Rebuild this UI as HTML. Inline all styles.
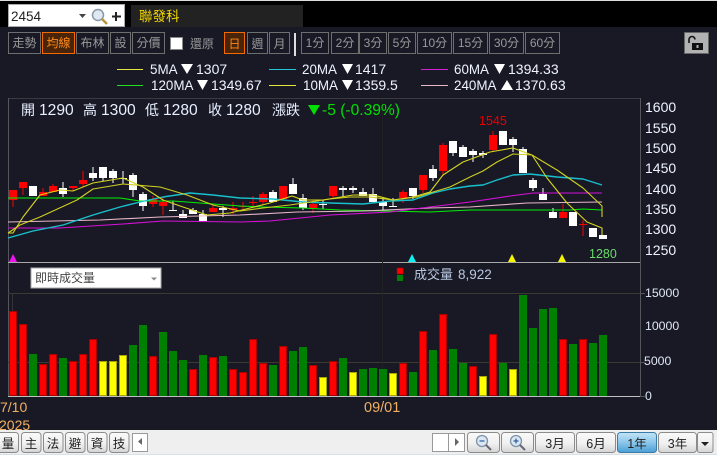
<!DOCTYPE html>
<html><head><meta charset="utf-8"><style>
html,body{margin:0;padding:0;background:#191926;width:717px;height:455px;overflow:hidden}
svg{display:block}
text{font-family:"Liberation Sans","WenQuanYi Zen Hei","Noto Sans CJK TC",sans-serif}
.b{fill:none;stroke:#6e6e6e;stroke-width:1}
.bt{fill:#999;font-size:12px;text-anchor:middle}
.m{fill:#eef4ff;font-size:14px}
.l{fill:#eef4ff;font-size:13.4px}
.r{fill:#eef4ff;font-size:14px}
.v{fill:#dfe8f5;font-size:12.3px}
.h{fill:#e8f0ff;font-size:15.6px}
.c{fill:#e8f0ff;font-size:14px}
.tb{fill:url(#g);stroke:#8c8c8c}
.tt{fill:#222;font-size:12.5px;text-anchor:middle}
</style></head><body>
<svg width="717" height="455" viewBox="0 0 717 455" xmlns="http://www.w3.org/2000/svg">
<defs>
<linearGradient id="g" x1="0" y1="0" x2="0" y2="1"><stop offset="0" stop-color="#fafafa"/><stop offset=".55" stop-color="#f0f0f0"/><stop offset="1" stop-color="#d4d4d4"/></linearGradient>
<linearGradient id="a" x1="0" y1="0" x2="0" y2="1"><stop offset="0" stop-color="#c4e4f6"/><stop offset=".5" stop-color="#8cc6ea"/><stop offset="1" stop-color="#4a9ed4"/></linearGradient>
</defs>
<rect width="717" height="455" fill="#191926"/>
<!-- top -->
<rect width="717" height="27" fill="#000"/>
<rect width="717" height="1" fill="#ddd"/>
<rect x="8.500" y="4.500" width="116" height="22" fill="#fff" stroke="#aaa"/>
<text x="11" y="21" font-size="13.500" fill="#222">2454</text>
<path d="M79 14h7l-3.500 4z" fill="#444"/>
<circle cx="98" cy="15" r="5.500" fill="#dfe9f2" stroke="#8a98a6" stroke-width="1.500"/>
<path d="M102 19l5 5" stroke="#b8953c" stroke-width="2.500"/>
<path d="M116 12v9M112 16.500h9" stroke="#222" stroke-width="2"/>
<rect x="131" y="5" width="172" height="22" fill="#222"/>
<text x="139" y="21" font-size="13.500" fill="#f5d800">聯發科</text>
<!-- buttons -->
<g shape-rendering="crispEdges">
<rect class="b" x="8.500" y="32.500" width="32" height="21"/>
<rect x="42.500" y="32.500" width="32" height="21" fill="#4a2408" stroke="#f26a00"/>
<rect class="b" x="76.500" y="32.500" width="32" height="21"/>
<rect class="b" x="110.500" y="32.500" width="20" height="21"/>
<rect class="b" x="132.500" y="32.500" width="32" height="21"/>
<rect x="170.500" y="37.500" width="12" height="12" fill="#fff" stroke="#888"/>
<rect x="224.500" y="32.500" width="20" height="21" fill="#4a2408" stroke="#f26a00"/>
<rect class="b" x="247.500" y="32.500" width="20" height="21"/>
<rect class="b" x="269.500" y="32.500" width="20" height="21"/>
<rect x="294" y="33" width="2" height="23" fill="#ddd"/>
<rect class="b" x="301.500" y="32.500" width="27" height="21"/>
<rect class="b" x="331.500" y="32.500" width="27" height="21"/>
<rect class="b" x="359.500" y="32.500" width="27" height="21"/>
<rect class="b" x="388.500" y="32.500" width="27" height="21"/>
<rect class="b" x="417.500" y="32.500" width="34" height="21"/>
<rect class="b" x="453.500" y="32.500" width="34" height="21"/>
<rect class="b" x="489.500" y="32.500" width="34" height="21"/>
<rect class="b" x="525.500" y="32.500" width="34" height="21"/>
<rect x="684.500" y="32.500" width="24" height="21" fill="#b2b2b2" stroke="#666"/>
</g>
<text class="bt" x="24.500" y="47">走勢</text>
<text class="bt" x="58.500" y="47" style="fill:#ff8a1a">均線</text>
<text class="bt" x="92.500" y="47">布林</text>
<text class="bt" x="120.500" y="47">設</text>
<text class="bt" x="148.500" y="47">分價</text>
<text class="bt" x="202" y="48">還原</text>
<text class="bt" x="234.500" y="48" style="fill:#ff8a1a">日</text>
<text class="bt" x="257.500" y="48">週</text>
<text class="bt" x="279.500" y="48">月</text>
<text class="bt" x="315" y="47">1分</text>
<text class="bt" x="345" y="47">2分</text>
<text class="bt" x="373" y="47">3分</text>
<text class="bt" x="402" y="47">5分</text>
<text class="bt" x="434.500" y="47">10分</text>
<text class="bt" x="470.500" y="47">15分</text>
<text class="bt" x="506.500" y="47">30分</text>
<text class="bt" x="542.500" y="47">60分</text>
<path d="M689 43v-3.500a3 3 0 0 1 6 0" fill="none" stroke="#111" stroke-width="1.600"/>
<rect x="692" y="43" width="11" height="7" fill="#111"/>
<rect x="696.500" y="45" width="2" height="3" fill="#b2b2b2"/>
<!-- MA legend -->
<g shape-rendering="crispEdges" stroke-width="1">
<path d="M117 69.500h26" stroke="#e6e640"/>
<path d="M117 85.500h26" stroke="#20e020"/>
<path d="M269 69.500h27" stroke="#20c8d8"/>
<path d="M269 85.500h27" stroke="#e6e640"/>
<path d="M421 69.500h27" stroke="#d020d0"/>
<path d="M421 85.500h27" stroke="#e8b8c8"/>
</g>
<text class="l" x="150" y="74">5MA</text>
<path d="M181 64h12l-6 10z" fill="#fff"/>
<text class="m" x="196" y="74">1307</text>
<text class="l" x="151" y="90">120MA</text>
<path d="M197 80h11l-5.500 10z" fill="#fff"/>
<text class="m" x="211" y="90">1349.67</text>
<text class="l" x="302" y="74">20MA</text>
<path d="M342 64h11l-5.500 10z" fill="#fff"/>
<text class="m" x="355" y="74">1417</text>
<text class="l" x="303" y="90">10MA</text>
<path d="M342 80h11l-5.500 10z" fill="#fff"/>
<text class="m" x="355" y="90">1359.5</text>
<text class="l" x="454" y="74">60MA</text>
<path d="M494 64h11l-5.500 10z" fill="#fff"/>
<text class="m" x="508" y="74">1394.33</text>
<text class="l" x="454" y="90">240MA</text>
<path d="M501 90h12l-6-10z" fill="#fff"/>
<text class="m" x="515" y="90">1370.63</text>
<!-- chart frame -->
<g shape-rendering="crispEdges" fill="none">
<path d="M8 98.500H640" stroke="#3a3a42"/>
<path d="M8.500 98V396" stroke="#55555c"/>
<path d="M640.500 98V397" stroke="#55555c"/>
<path d="M8 262.500H640" stroke="#a8a8a8"/>
<path d="M8 293.500H640M8 362.500H640" stroke="#3a3a30"/>
<path d="M382.500 99V396" stroke="#222226"/>
<path d="M12.500 293V311" stroke="#33333a"/>
<path d="M640 293.500h5M640 362.500h5M640 396.500h5" stroke="#55555c"/>
</g>
<!-- header -->
<text class="c" x="21" y="115">開</text><text class="h" x="39" y="115">1290</text>
<text class="c" x="83" y="115">高</text><text class="h" x="101" y="115">1300</text>
<text class="c" x="145" y="115">低</text><text class="h" x="163" y="115">1280</text>
<text class="c" x="208" y="115">收</text><text class="h" x="226" y="115">1280</text>
<text class="c" x="272" y="115">漲跌</text>
<path d="M308 105h12l-6 10z" fill="#00e000"/>
<text x="322" y="115" font-size="15.600" fill="#00e000">-5 (-0.39%)</text>
<!-- candles -->
<g shape-rendering="crispEdges">
<path fill="none" stroke="#f00" d="M13 190V207M23 182V195M43 188V196M53 184V192M73 186V191M83 171V187M153 196V207M163 197V215M213 205V212M233 202V214M243 202V210M253 196V207M263 192V204M313 200V213M333 186V198M403 190V203M423 175V193M443 143V176M493 131V152M563 204V218M583 220V236"/>
<path fill="#f00" d="M9 190h8v10h-8zM19 182h8v6h-8zM39 192h8v4h-8zM49 186h8v6h-8zM69 186h8v2h-8zM79 180h8v4h-8zM149 199h8v5h-8zM159 202h8v4h-8zM209 208h8v4h-8zM229 208h8v2h-8zM239 206h8v1h-8zM249 202h8v1h-8zM259 194h8v8h-8zM279 186h8v13h-8zM309 204h8v4h-8zM329 186h8v10h-8zM399 192h8v6h-8zM419 175h8v15h-8zM439 145h8v26h-8zM489 135h8v15h-8zM559 212h8v6h-8zM579 224h8v1h-8z"/>
<path fill="none" stroke="#fff" d="M63 182V197M93 167V181M103 167V181M113 169V183M123 171V184M133 173V197M143 192V211M173 201V211M183 210V218M193 208V214M203 210V221M223 206V217M273 190V202M293 178V194M303 194V210M323 200V209M343 186V197M353 186V193M363 188V196M373 188V202M383 198V210M393 198V207M413 188V199M433 165V181M453 141V156M463 145V157M473 149V162M483 151V158M513 137V152M523 147V173M533 178V191M543 188V200M553 208V218"/>
<path fill="#fff" d="M29 186h8v10h-8zM59 188h8v6h-8zM89 173h8v5h-8zM99 167h8v11h-8zM109 171h8v7h-8zM119 178h8v1h-8zM129 175h8v15h-8zM139 194h8v12h-8zM169 210h8v1h-8zM179 214h8v4h-8zM189 210h8v4h-8zM199 214h8v7h-8zM219 208h8v2h-8zM269 192h8v10h-8zM289 184h8v10h-8zM299 198h8v10h-8zM319 204h8v1h-8zM339 188h8v2h-8zM349 188h8v2h-8zM359 192h8v4h-8zM369 194h8v8h-8zM379 202h8v4h-8zM389 206h8v1h-8zM409 188h8v8h-8zM429 169h8v9h-8zM449 141h8v12h-8zM459 147h8v10h-8zM469 151h8v4h-8zM479 153h8v2h-8zM499 131h8v14h-8zM509 139h8v6h-8zM519 149h8v24h-8zM529 180h8v8h-8zM539 194h8v6h-8zM549 212h8v6h-8zM569 212h8v14h-8zM589 228h8v9h-8zM599 235h8v4h-8z"/>
</g>
<!-- MA lines -->
<g fill="none" stroke-width="1.100" stroke-linejoin="round">
<polyline stroke="#00ee00" points="8,198 120,198 140,201 173,201 200,203 240,206 263,207 303,208 340,210 430,212 470,210 570,210 583,209 602,210"/>
<polyline stroke="#e8b8c8" points="8,222 100,220 160,217 240,215 297,212 363,211 430,208 470,207 527,203 602,202"/>
<polyline stroke="#d810d8" points="8,228 60,228 123,224 163,221 240,222 270,221 330,215 390,212 430,207 470,202 510,196 533,193 602,193"/>
<polyline stroke="#18c0cc" stroke-width="1.400" points="8,238 33,231 63,225 93,215 120,207 140,202 163,197 190,193 213,195 240,198 273,199 303,202 330,203 363,204 390,201 413,200 433,193 450,189 470,186 483,185 497,180 513,175 530,174 557,177 583,179 602,185"/>
<polyline stroke="#cfcf20" points="8,233 20,225 40,217 77,200 93,189 123,184 160,187 187,195 213,205 240,211 263,208 290,205 310,202 330,199 350,197 370,197 393,200 417,197 433,192 450,187 470,177 483,171 497,162 513,154 532,155 557,170 583,188 602,206 602,217"/>
<polyline stroke="#d6d620" points="8,233 13,233 23,217 40,195 60,190 73,191 93,183 123,178 143,187 163,200 183,207 207,215 230,213 250,208 270,203 292,196 303,200 323,200 353,195 373,195 393,200 413,197 430,192 443,175 463,162 490,152 513,148 532,155 547,178 567,203 587,222 602,228 602,235"/>
</g>
<!-- markers -->
<path d="M13 254l4 8h-8z" fill="#f010f0"/>
<path d="M412 254l4 8h-8z" fill="#10f0f0"/>
<path d="M512 254l4 8h-8z" fill="#f5f500"/>
<path d="M562 254l4 8h-8z" fill="#f5f500"/>
<text x="479" y="125" font-size="12.500" fill="#e80000">1545</text>
<text x="589" y="258" font-size="12.500" fill="#66dd66">1280</text>
<!-- axis labels -->
<text class="r" x="645" y="112">1600</text>
<text class="r" x="645" y="133">1550</text>
<text class="r" x="645" y="153">1500</text>
<text class="r" x="645" y="173">1450</text>
<text class="r" x="645" y="194">1400</text>
<text class="r" x="645" y="214">1350</text>
<text class="r" x="645" y="234">1300</text>
<text class="r" x="645" y="255">1250</text>
<text class="v" x="645" y="297">15000</text>
<text class="v" x="645" y="330">10000</text>
<text class="v" x="644" y="365">5000</text>
<text class="v" x="645" y="400">0</text>
<!-- volume -->
<g shape-rendering="crispEdges">
<path fill="#f00" stroke="#a80000" d="M9.500 311.500h7V395.500h-7zM19.500 324.500h7V395.500h-7zM39.500 364.500h7V395.500h-7zM49.500 354.500h7V395.500h-7zM69.500 361.500h7V395.500h-7zM79.500 354.500h7V395.500h-7zM89.500 339.500h7V395.500h-7zM149.500 356.500h7V395.500h-7zM189.500 369.500h7V395.500h-7zM209.500 357.500h7V395.500h-7zM229.500 369.500h7V395.500h-7zM239.500 372.500h7V395.500h-7zM249.500 339.500h7V395.500h-7zM259.500 363.500h7V395.500h-7zM279.500 346.500h7V395.500h-7zM309.500 365.500h7V395.500h-7zM329.500 361.500h7V395.500h-7zM399.500 363.500h7V395.500h-7zM419.500 331.500h7V395.500h-7zM439.500 314.500h7V395.500h-7zM469.500 366.500h7V395.500h-7zM489.500 334.500h7V395.500h-7zM559.500 339.500h7V395.500h-7zM579.500 339.500h7V395.500h-7z"/>
<path fill="#ffff00" stroke="#a6a600" d="M99.500 361.500h7V395.500h-7zM109.500 361.500h7V395.500h-7zM119.500 355.500h7V395.500h-7zM319.500 377.500h7V395.500h-7zM349.500 372.500h7V395.500h-7zM389.500 373.500h7V395.500h-7zM479.500 376.500h7V395.500h-7zM509.500 369.500h7V395.500h-7z"/>
<path fill="#008000" d="M29 354h8V396h-8zM59 358h8V396h-8zM129 345h8V396h-8zM139 325h8V396h-8zM159 332h8V396h-8zM169 351h8V396h-8zM179 360h8V396h-8zM199 355h8V396h-8zM219 356h8V396h-8zM269 365h8V396h-8zM289 351h8V396h-8zM299 347h8V396h-8zM339 358h8V396h-8zM359 369h8V396h-8zM369 368h8V396h-8zM379 369h8V396h-8zM409 372h8V396h-8zM429 350h8V396h-8zM449 349h8V396h-8zM459 363h8V396h-8zM499 363h8V396h-8zM519 295h8V396h-8zM529 328h8V396h-8zM539 309h8V396h-8zM549 308h8V396h-8zM569 344h8V396h-8zM589 343h8V396h-8zM599 335h8V396h-8z"/>
<path d="M8 396.500H640" stroke="#c0c0c0" fill="none"/>
</g>
<!-- dropdown -->
<rect x="31" y="268" width="130" height="20" fill="#fff" stroke="#aaa" shape-rendering="crispEdges"/>
<text x="35" y="282" font-size="12" fill="#444">即時成交量</text>
<path d="M151 277.500h6l-3 3z" fill="#888"/>
<!-- volume legend -->
<rect x="397" y="268" width="6" height="6" fill="#f00" stroke="#a00" stroke-width=".5"/>
<rect x="397" y="275" width="6" height="6" fill="#008000"/>
<text x="414" y="279" font-size="13" fill="#b8c8e0">成交量</text>
<text x="458" y="279" font-size="13.500" fill="#b8c8e0">8,922</text>
<!-- dates -->
<text x="0" y="412" font-size="14" fill="#f0b060">7/10</text>
<text x="364" y="412" font-size="14.500" fill="#f0b060">09/01</text>
<text x="-1" y="430" font-size="14" fill="#f0b060">2025</text>
<!-- bottom bar -->
<rect x="0" y="430" width="717" height="25" fill="#efefef"/>
<rect x="0" y="454" width="717" height="1" fill="#d8e0e8"/>
<g>
<rect class="tb" x="-3.500" y="432.500" width="22" height="20" rx="3"/>
<rect class="tb" x="21.500" y="432.500" width="19.500" height="20" rx="3"/>
<rect class="tb" x="43.500" y="432.500" width="19.500" height="20" rx="3"/>
<rect class="tb" x="65.500" y="432.500" width="19.500" height="20" rx="3"/>
<rect class="tb" x="87.500" y="432.500" width="19.500" height="20" rx="3"/>
<rect class="tb" x="109.500" y="432.500" width="19.500" height="20" rx="3"/>
<rect x="132.500" y="433.500" width="15" height="18" fill="#fff" stroke="#999"/>
<path d="M142 438v7l-4-3.500z" fill="#666"/>
<rect x="432.500" y="433.500" width="16" height="18" fill="#fff" stroke="#999"/>
<rect x="448.500" y="433.500" width="16" height="18" fill="#fff" stroke="#999"/>
<path d="M455 438v8l4-4z" fill="#666"/>
<rect class="tb" x="467.500" y="432.500" width="32" height="20" rx="3"/>
<rect class="tb" x="501.500" y="432.500" width="32" height="20" rx="3"/>
<rect class="tb" x="535.500" y="432.500" width="39" height="20" rx="3"/>
<rect class="tb" x="576.500" y="432.500" width="39" height="20" rx="3"/>
<rect x="617.500" y="432.500" width="39" height="20" rx="3" fill="url(#a)" stroke="#3a7ca5"/>
<rect class="tb" x="658.500" y="432.500" width="38" height="20" rx="3"/>
<rect class="tb" x="697.500" y="432.500" width="15.500" height="20" rx="2"/>
<path d="M701 442h8l-4 4z" fill="#222"/>
</g>
<text class="tt" x="8" y="448">量</text>
<text class="tt" x="31" y="448">主</text>
<text class="tt" x="53" y="448">法</text>
<text class="tt" x="75" y="448">避</text>
<text class="tt" x="97" y="448">資</text>
<text class="tt" x="119" y="448">技</text>
<circle cx="482" cy="441" r="5.500" fill="#dbe8f4" stroke="#7f93a8" stroke-width="1.300"/>
<path d="M479.500 441h5" stroke="#2a5aa0" stroke-width="1.200"/>
<path d="M486 445l5 5" stroke="#667" stroke-width="2"/>
<circle cx="516" cy="441" r="5.500" fill="#dbe8f4" stroke="#7f93a8" stroke-width="1.300"/>
<path d="M513.500 441h5M516 438.500v5" stroke="#2a5aa0" stroke-width="1.200"/>
<path d="M520 445l5 5" stroke="#667" stroke-width="2"/>
<text class="tt" x="555" y="448">3月</text>
<text class="tt" x="596" y="448">6月</text>
<text class="tt" x="637" y="448">1年</text>
<text class="tt" x="677.500" y="448">3年</text>
</svg>
</body></html>
